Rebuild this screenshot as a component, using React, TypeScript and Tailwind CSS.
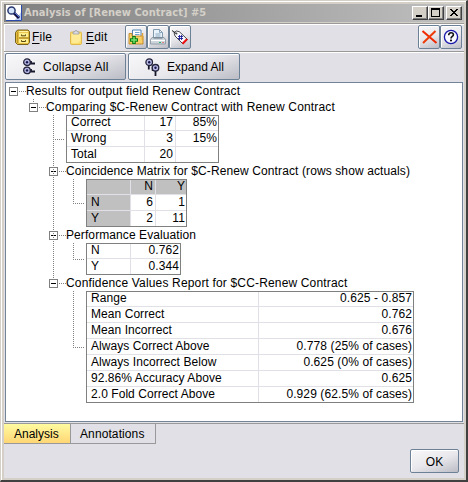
import type { ReactNode } from "react";

const vDots =
  "absolute w-px bg-[repeating-linear-gradient(to_bottom,#808080_0_1px,transparent_1px_2px)]";
const hDots =
  "h-px bg-[repeating-linear-gradient(to_right,#808080_0_1px,transparent_1px_2px)]";
const raised =
  "flex items-center rounded-[2px] border border-[#6d8196] bg-[linear-gradient(160deg,#f8f8fa_0%,#e9e9ed_50%,#bcbcc6_100%)] shadow-[inset_1px_1px_0_#ffffff]";

function TreeNode({
  title,
  spacing,
  children,
}: {
  title: string;
  spacing: string;
  children?: ReactNode;
}) {
  return (
    <li>
      <div className="flex h-4 items-start">
        <span className="mt-1 flex size-[9px] shrink-0 items-center justify-center border border-[#808080] bg-white">
          <span className="h-px w-[5px] bg-black" />
        </span>
        <span className={`mt-2 ml-px w-[7px] shrink-0 ${hDots}`} />
        <span className={`leading-4 whitespace-pre ${spacing}`}>{title}</span>
      </div>
      {children}
    </li>
  );
}

function ReportTable({
  rows,
  columns,
  width,
  header = false,
}: {
  rows: string[][];
  columns: string;
  width: string;
  header?: boolean;
}) {
  return (
    <div className="relative">
      <span className={`${vDots} top-0 left-[24px] h-1/2`} />
      <span className={`absolute top-1/2 left-[24px] w-[12px] ${hDots}`} />
      <div className={`relative ml-[37px] ${width}`}>
        {rows.map((row, r) => (
          <div key={r} className={`grid h-4 ${columns}`}>
            {row.map((cell, c) => (
              <span
                key={c}
                className={`h-4 border-b border-[#e1e0e6] leading-[15px] whitespace-pre ${
                  c === 0 ? "pl-[5px] tracking-[0.06px]" : "pr-[2px] text-right tracking-[0.1px]"
                } ${c < row.length - 1 ? "border-r" : ""} ${
                  header && (r === 0 || c === 0) ? "bg-[#c0c0c0]" : ""
                }`}
              >
                {cell}
              </span>
            ))}
          </div>
        ))}
        <div className="absolute inset-0 border border-[#808080]" />
      </div>
    </div>
  );
}

function CaptionButton({ children }: { children: ReactNode }) {
  return (
    <span className="h-[14px] w-4 border border-t-white border-r-[#404040] border-b-[#404040] border-l-white bg-[#d4d0c8] shadow-[inset_-1px_-1px_0_#808080]">
      <svg width="14" height="12" shapeRendering="crispEdges">{children}</svg>
    </span>
  );
}

function ToolButton({ children }: { children: ReactNode }) {
  return (
    <span className={`h-6 w-[22px] justify-center ${raised}`}>
      <svg className="shrink-0" width="18" height="18" viewBox="0 0 18 18">{children}</svg>
    </span>
  );
}

function Ring({ cx, cy }: { cx: number; cy: number }) {
  return (
    <g>
      <circle cx={cx} cy={cy} r="3.3" fill="#b9b9e6" stroke="#22223a" strokeWidth="1.3" />
      <circle cx={cx} cy={cy} r="1.2" fill="#16164a" />
    </g>
  );
}

export default function App() {
  return (
    <div className="flex h-[482px] w-[468px] flex-col border-t border-r-2 border-b-2 border-l border-t-[#d4d0c8] border-r-[#404040] border-b-[#404040] border-l-[#d4d0c8] bg-[#d4d0c8] font-['Liberation_Sans',Arial,sans-serif] text-[12px] text-black">
      <div className="flex min-h-0 flex-1 flex-col border-t border-l border-white pt-[2px] pr-[2px] pb-[2px] pl-[2px]">
        <header className="flex h-[18px] shrink-0 items-center bg-[linear-gradient(to_right,#808080,#c0c0c0)] pr-[2px]">
          <svg className="ml-[2px]" width="16" height="16" viewBox="0 0 16 16">
            <rect width="16" height="16" fill="#fff" />
            <path d="M8 16L16 6V16z" fill="#b8cdf4" />
            <path d="M0 15.5H15.5V0" fill="none" stroke="#2c4aa8" />
            <path d="M8 8L13 13" stroke="#111144" strokeWidth="3" />
            <path d="M9 8L13 12" stroke="#4a70d8" strokeWidth="1" />
            <circle cx="5.5" cy="5.5" r="3.6" fill="#d5e5fb" stroke="#26366e" strokeWidth="1.5" />
          </svg>
          <h1 className="ml-[2px] flex-1 font-['DejaVu_Sans_Condensed','DejaVu_Sans',sans-serif] text-[11px] leading-[18px] font-bold tracking-[0.05px] whitespace-pre text-[#d4d0c8] [font-stretch:condensed]">
            Analysis of [Renew Contract] #5
          </h1>
          <CaptionButton>
            <rect x="3" y="8" width="6" height="2" />
          </CaptionButton>
          <CaptionButton>
            <path d="M2 1H11V10H2zM3 3V9H10V3z" fillRule="evenodd" />
          </CaptionButton>
          <span className="w-[2px]" />
          <CaptionButton>
            <path d="M3 2h2v1h1v1h2v-1h1v-1h2v1h-1v1h-1v1h-1v1h1v1h1v1h1v1h-2v-1h-1v-1h-2v1h-1v1h-2v-1h1v-1h1v-1h1v-1h-1v-1h-1v-1h-1z" />
          </CaptionButton>
        </header>

        <main className="mt-px flex min-h-0 flex-1 flex-col bg-[#e1e0e6]">
          <div className="flex h-[29px] shrink-0 items-start border-t border-b border-[#999999] shadow-[inset_1px_1px_0_#fff,0_1px_0_#fff]">
            <div className="mt-px flex h-6 items-center">
              <svg className="ml-[11px]" width="15" height="16" viewBox="0 0 15 16">
                <path d="M.5 3.5L2.5 1H13L14.5 2.5V13.5L13 15.5H2.5L.5 13.5z" fill="#e5bd3c" stroke="#6b5514" strokeWidth=".9" />
                <path d="M4 2H13V3.2H4z" fill="#fff3a8" />
                <path d="M4 4H13V8.3H4zM4 9.7H13V14H4z" fill="#ffee90" />
                <path d="M4 9H14" stroke="#96751a" strokeWidth=".9" />
                <path d="M6.5 5.5V6.8H10.5V5.5M6.5 11.2V12.5H10.5V11.2" fill="none" stroke="#55460f" />
                <path d="M2.5 3V14" stroke="#c2972a" />
              </svg>
              <span className="ml-[2px] w-[22px] tracking-[0.2px]">
                <u className="underline-offset-2">F</u>ile
              </span>
              <svg className="ml-[16px]" width="12" height="15" viewBox="0 0 12 15">
                <rect x=".5" y="2" width="11" height="12.5" rx="1.2" fill="#fbdc66" stroke="#dcae3a" strokeWidth=".8" />
                <path d="M1.5 4H10.5V11L8 13H1.5z" fill="#ffeb96" />
                <path d="M3 4V2H4.5L5 .7H7L7.5 2H9V4z" fill="#dcdce4" stroke="#95959d" strokeWidth=".7" />
              </svg>
              <span className="ml-[4px] w-[38px] tracking-[0.2px]">
                <u className="underline-offset-2">E</u>dit
              </span>
            </div>
            <div className="mt-px ml-[1px] flex">
              <ToolButton>
                <path d="M5.5 2H14V12H5.5z" fill="#fff" stroke="#4d82b4" />
                <path d="M8 4.5H12.5M8 6.5H12.5" stroke="#71a5cf" />
                <path d="M2 5.5H5V8H16V16H2z" fill="#f7cf66" stroke="#c08726" strokeWidth=".9" />
                <path d="M15.5 5V12" stroke="#e0a63a" strokeWidth="1.5" />
                <path d="M7 8V16M3 12H11" stroke="#087c12" strokeWidth="3.6" />
                <path d="M7 9V15M4 12H10" stroke="#77e36d" strokeWidth="1.5" />
              </ToolButton>
              <ToolButton>
                <path d="M4.5 1.5H10.5L13.5 4.5V10H4.5z" fill="#e7f2fa" stroke="#8199ad" />
                <path d="M10.5 1.5V4.5H13.5M6.5 6H11.5M6.5 8H11.5" fill="none" stroke="#8ba7bf" />
                <path d="M3 9.5H15L16.5 11.5V16H1.5V11.5z" fill="#ccd4dc" stroke="#8b98a4" strokeWidth=".9" />
                <path d="M4.5 10H13.5" stroke="#667785" />
                <path d="M2 12.5H16" stroke="#fff" />
                <path d="M10 14.5H12" stroke="#35b56a" />
                <path d="M13 14.5H15" stroke="#e28282" />
              </ToolButton>
              <ToolButton>
                <path d="M3 4.5L5.5 3L8.5 3.8L16.5 11.5L12 16L4 8z" fill="#f9f9ff" stroke="#33333b" strokeWidth=".9" />
                <path d="M16.8 11.8L12.3 16.6L10.8 15L15.2 10.4z" fill="#f01010" />
                <path d="M1 2.5L5 5.5" stroke="#222" />
                <circle cx="5.5" cy="5.5" r=".9" fill="#444" />
                <path d="M8.5 7V12M10.5 7V12M7 8.5H12M7 10.5H12" stroke="#1c1c9a" strokeWidth=".9" />
              </ToolButton>
            </div>
            <div className="mt-px ml-auto flex pr-[2px]">
              <ToolButton>
                <path d="M2.5 3L16.5 15" stroke="#f02800" strokeWidth="2" />
                <path d="M15.5 3L3 15" stroke="#ec3a08" strokeWidth="2" />
              </ToolButton>
              <ToolButton>
                <circle cx="9" cy="9" r="6.6" fill="#f8f8ff" stroke="#1717aa" strokeWidth="1.3" />
                <path d="M6.7 7.2C6.7 3.9 11.4 4 11.4 6.7C11.4 8.4 9 8.4 9 10.5" fill="none" stroke="#111" strokeWidth="1.6" />
                <rect x="8" y="11.6" width="2" height="1.7" fill="#111" />
              </ToolButton>
            </div>
          </div>

          <div className="mt-px flex h-7 shrink-0 gap-[2px] pl-px">
            <button className={`h-[27px] w-[121px] pl-[16px] ${raised}`}>
              <svg className="shrink-0" width="14" height="17" viewBox="0 0 14 17">
                <path d="M7 4H9V5.5H13M7 12H9V13.5H13" fill="none" stroke="#17172b" strokeWidth="1.8" />
                <Ring cx={5} cy={4.2} />
                <Ring cx={5} cy={12.4} />
              </svg>
              <span className="ml-[7px] tracking-[0.25px] whitespace-pre">Collapse All</span>
            </button>
            <button className={`h-[27px] w-[112px] pl-[16px] ${raised}`}>
              <svg className="shrink-0" width="15" height="18" viewBox="0 0 15 18">
                <path d="M3.8 6V11.5M10.5 12V18" stroke="#17172b" strokeWidth="1.8" />
                <path d="M7.5 13V9" stroke="#17172b" strokeWidth="1.4" />
                <Ring cx={4.2} cy={4.2} />
                <Ring cx={10.5} cy={9.8} />
              </svg>
              <span className="ml-[7px] tracking-[0.02px] whitespace-pre">Expand All</span>
            </button>
          </div>

          <div className="mt-px mr-px ml-px h-[340px] shrink-0 border border-[#72839a] bg-white">
            <ul className="pl-[3px]">
              <TreeNode title="Results for output field Renew Contract" spacing="tracking-[0.14px]">
                <ul className="relative pl-5">
                  <span className={`${vDots} top-0 left-[24px] h-1`} />
                  <TreeNode
                    title="Comparing $C-Renew Contract with Renew Contract"
                    spacing="tracking-[0.16px]"
                  >
                    <ReportTable
                      width="w-[153px]"
                      columns="grid-cols-[79px_31px_43px]"
                      rows={[
                        ["Correct", "17", "85%"],
                        ["Wrong", "3", "15%"],
                        ["Total", "20", ""],
                      ]}
                    />
                    <ul className="relative pl-5">
                      <span className={`${vDots} top-[-48px] left-[24px] h-[164px]`} />
                      <TreeNode
                        title="Coincidence Matrix for $C-Renew Contract (rows show actuals)"
                        spacing="tracking-[0.11px]"
                      >
                        <ReportTable
                          header
                          width="w-[101px]"
                          columns="grid-cols-[45px_25px_31px]"
                          rows={[
                            ["", "N", "Y"],
                            ["N", "6", "1"],
                            ["Y", "2", "11"],
                          ]}
                        />
                      </TreeNode>
                      <TreeNode title="Performance Evaluation" spacing="tracking-[0.09px]">
                        <ReportTable
                          width="w-[95px]"
                          columns="grid-cols-[45px_50px]"
                          rows={[
                            ["N", "0.762"],
                            ["Y", "0.344"],
                          ]}
                        />
                      </TreeNode>
                      <TreeNode
                        title="Confidence Values Report for $CC-Renew Contract"
                        spacing="tracking-[0.16px]"
                      >
                        <ReportTable
                          width="w-[328px]"
                          columns="grid-cols-[173px_155px]"
                          rows={[
                            ["Range", "0.625 - 0.857"],
                            ["Mean Correct", "0.762"],
                            ["Mean Incorrect", "0.676"],
                            ["Always Correct Above", "0.778 (25% of cases)"],
                            ["Always Incorrect Below", "0.625 (0% of cases)"],
                            ["92.86% Accuracy Above", "0.625"],
                            ["2.0 Fold Correct Above", "0.929 (62.5% of cases)"],
                          ]}
                        />
                      </TreeNode>
                    </ul>
                  </TreeNode>
                </ul>
              </TreeNode>
            </ul>
          </div>

          <div className="mt-px flex h-[21px] shrink-0 border-t border-[#999999]">
            <span className="h-5 w-[67px] border-r border-b border-[#999999] bg-[linear-gradient(to_bottom,#fffba0,#ffd675)] pl-[10px] leading-[21px]">
              Analysis
            </span>
            <span className="h-5 w-[85px] border-r border-b border-[#999999] pl-[9px] leading-[21px] tracking-[0.1px]">
              Annotations
            </span>
          </div>
          <div className="mt-[5px] flex justify-end pr-[5px]">
            <button className={`h-6 w-[49px] justify-center pt-px ${raised}`}>OK</button>
          </div>
        </main>
      </div>
    </div>
  );
}
